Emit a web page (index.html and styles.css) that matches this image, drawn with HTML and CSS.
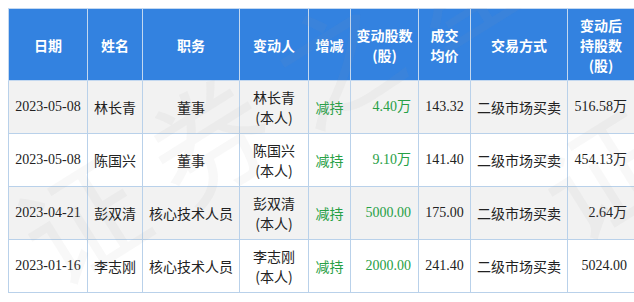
FILE: index.html
```html
<!DOCTYPE html>
<html lang="zh-CN">
<head>
    <meta charset="UTF-8">
    <title>高管持股变动</title>
    <link rel="stylesheet" href="styles.css">
</head>
<body>
    <div class="wrap">
        <table class="trade-table">
            <colgroup>
                <col style="width: 79px">
                <col style="width: 55px">
                <col style="width: 97px">
                <col style="width: 69px">
                <col style="width: 42px">
                <col style="width: 68px">
                <col style="width: 52px">
                <col style="width: 97px">
                <col style="width: 67px">
            </colgroup>
            <thead>
                <tr>
                    <th>日期</th>
                    <th>姓名</th>
                    <th>职务</th>
                    <th>变动人</th>
                    <th>增减</th>
                    <th>变动股数<br>(股)</th>
                    <th>成交<br>均价</th>
                    <th>交易方式</th>
                    <th>变动后<br>持股数<br>(股)</th>
                </tr>
            </thead>
            <tbody>
                <tr class="odd">
                    <td class="num">2023-05-08</td>
                    <td>林长青</td>
                    <td>董事</td>
                    <td>林长青<br>(本人)</td>
                    <td class="green">减持</td>
                    <td class="num green right">4.40万</td>
                    <td class="num">143.32</td>
                    <td>二级市场买卖</td>
                    <td class="num right">516.58万</td>
                </tr>
                <tr>
                    <td class="num">2023-05-08</td>
                    <td>陈国兴</td>
                    <td>董事</td>
                    <td>陈国兴<br>(本人)</td>
                    <td class="green">减持</td>
                    <td class="num green right">9.10万</td>
                    <td class="num">141.40</td>
                    <td>二级市场买卖</td>
                    <td class="num right">454.13万</td>
                </tr>
                <tr class="odd">
                    <td class="num">2023-04-21</td>
                    <td>彭双清</td>
                    <td>核心技术人员</td>
                    <td>彭双清<br>(本人)</td>
                    <td class="green">减持</td>
                    <td class="num green right">5000.00</td>
                    <td class="num">175.00</td>
                    <td>二级市场买卖</td>
                    <td class="num right">2.64万</td>
                </tr>
                <tr>
                    <td class="num">2023-01-16</td>
                    <td>李志刚</td>
                    <td>核心技术人员</td>
                    <td>李志刚<br>(本人)</td>
                    <td class="green">减持</td>
                    <td class="num green right">2000.00</td>
                    <td class="num">241.40</td>
                    <td>二级市场买卖</td>
                    <td class="num right">5024.00</td>
                </tr>
            </tbody>
        </table>

        <!-- 水印 -->
        <div class="watermark">
            <span class="wm wm-1">证券之星</span>
            <span class="wm wm-2">证券之星</span>
        </div>
    </div>
</body>
</html>
```

FILE: styles.css
```css
html, body {
    overflow: hidden;
}
body {
    margin: 8px 0 0 8px;
    background: #fff;
    font-family: "Noto Sans CJK SC", sans-serif;
    font-size: 14px;
    color: #222;
}
.wrap {
    position: relative;
    width: 626px;
}
.trade-table {
    width: 626px;
    table-layout: fixed;
    border-collapse: collapse;
    border: 1px solid #b9d1ea;
}
.trade-table th,
.trade-table td {
    border: 1px solid #b9d1ea;
    line-height: 20px;
    text-align: center;
    vertical-align: middle;
    white-space: nowrap;
    padding: 0;
}
.trade-table th {
    background: #3382e0;
    color: #fff;
    font-weight: bold;
    height: 71px;
    border-color: #c3d8f0;
}
.trade-table td {
    height: 52px;
}
.trade-table tr.odd td {
    background: #f2f2f2;
}
.num {
    font-family: "Liberation Serif", "Noto Sans CJK SC", serif;
    font-size: 14px;
}
.trade-table td.right {
    text-align: right;
    padding-right: 7px;
}
.green {
    color: #27a046;
}
.watermark {
    position: absolute;
    top: -8px;
    left: -8px;
    width: 634px;
    height: 302px;
    overflow: hidden;
    pointer-events: none;
}
.wm {
    position: absolute;
    font-family: "Noto Sans CJK SC", sans-serif;
    font-size: 120px;
    line-height: 1;
    letter-spacing: 30px;
    color: rgba(150, 150, 150, 0.07);
    white-space: nowrap;
    transform: rotate(-32deg);
    transform-origin: left top;
}
.wm-1 {
    left: -3px;
    top: 196px;
}
.wm-2 {
    left: 517px;
    top: 151px;
}
```
